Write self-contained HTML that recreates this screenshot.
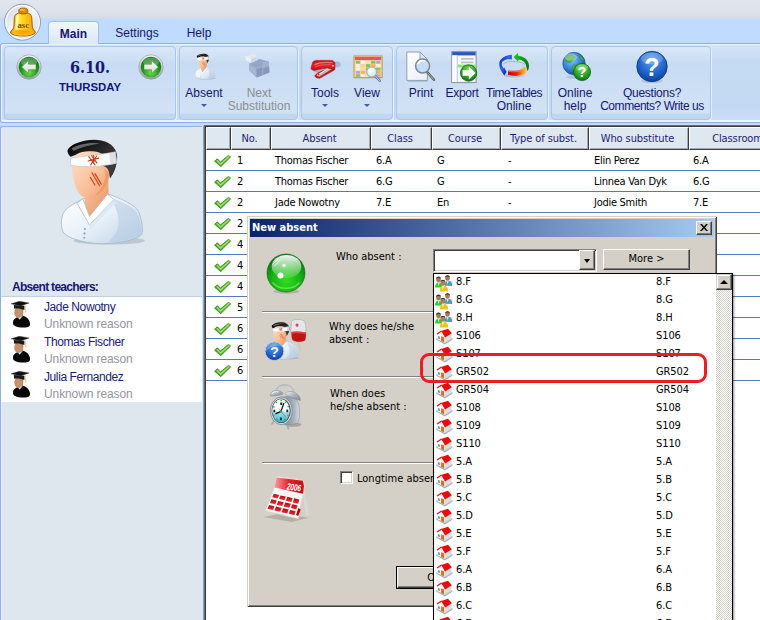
<!DOCTYPE html>
<html><head><meta charset="utf-8"><title>Substitutions</title>
<style>
*{box-sizing:border-box;margin:0;padding:0}
html,body{width:760px;height:620px;overflow:hidden}
body{position:relative;background:#bfdbff;font-family:"Liberation Sans",sans-serif;font-size:12px;color:#15156e}
.abs{position:absolute}
#titlebar{left:0;top:0;width:760px;height:19px;background:linear-gradient(#e2e6ee,#dde2eb 55%,#d6dce7);border-bottom:1px solid #cddcf0}
#tabrow{left:0;top:19px;width:760px;height:24px;background:#bfdbff}
.tab{position:absolute;top:21px;height:23px;line-height:24px;font-size:12px;color:#15156e;text-align:center}
#tabmain{left:48px;width:51px;background:linear-gradient(#f1f6fc,#dbe8f8);border:1px solid #9dbfe8;border-bottom:none;border-radius:4px 4px 0 0;font-weight:bold}
#ribbon{left:0;top:43px;width:764px;height:80px;border:1px solid #8fb0e0;border-bottom-color:#94acd6;border-radius:3px 0 0 3px;background:linear-gradient(#d6e5f7,#c6dbf3 20%,#c3d9f3 80%,#cbdff5);box-shadow:inset 1px 1px 0 #e2f4ff,inset 0 -2px 0 #e6f8ff}
.panel{position:absolute;top:46px;height:74px;border:1px solid #a9c7ea;border-radius:4px;background:linear-gradient(#d9e7f7,#cddff4 18%,#c7dbf3 22%,#d2e2f6 92%,#c0d7f2 93%,#c0d7f2);box-shadow:1px 1px 0 #e6f0fb}
.rlabel{position:absolute;text-align:center;font-size:12px;line-height:13px;color:#15156e;white-space:nowrap}
.rlabel.dis{color:#8d8d8d}
.dd{position:absolute;width:0;height:0;border-left:3px solid transparent;border-right:3px solid transparent;border-top:3px solid #3a5fa8}
</style></head><body>
<div id="titlebar" class="abs"></div>
<div id="tabrow" class="abs"></div>
<div id="ribbon" class="abs"></div>
<div id="tabmain" class="tab">Main</div>
<div class="tab" style="left:110px;width:54px">Settings</div>
<div class="tab" style="left:180px;width:38px">Help</div>
<!--ORB-->
<svg class="abs" style="left:3px;top:3px" width="40" height="40" viewBox="0 0 40 40">
<defs>
<linearGradient id="orbg" x1="0" y1="0" x2="1" y2="1"><stop offset="0" stop-color="#c9d0dc"/><stop offset=".45" stop-color="#f4f6fa"/><stop offset="1" stop-color="#cfd6e3"/></linearGradient>
<linearGradient id="bellg" x1="0" y1="0" x2="1" y2="0"><stop offset="0" stop-color="#e89a00"/><stop offset=".3" stop-color="#ffe94a"/><stop offset=".5" stop-color="#ffd21c"/><stop offset="1" stop-color="#f0a000"/></linearGradient>
<radialGradient id="bellb" cx="55%" cy="40%" r="70%"><stop offset="0" stop-color="#ff9a00"/><stop offset="1" stop-color="#ffc81e"/></radialGradient>
</defs>
<circle cx="19.5" cy="19.2" r="18" fill="url(#orbg)" stroke="#8e9bb3" stroke-width="1"/>
<circle cx="19.5" cy="19.2" r="16.6" fill="none" stroke="#fff" stroke-width="1.2" opacity=".8"/>
<path d="M15.2 10.2 C12.5 11 11.3 13 11.3 15.5 L11 22.6 C10.8 25.5 9.5 27 7.9 28.3 C7 29.5 7.5 30.5 9 31 C13 33.6 27 33.6 30.8 31 C32.3 30.5 32.8 29.5 31.9 28.3 C30.3 27 29.4 25.5 29.2 22.6 L28.8 15.5 C28.8 13 27.6 11 25.3 10.2 Z" fill="url(#bellg)" stroke="#a05a00" stroke-width="1"/>
<ellipse cx="19.9" cy="29.6" rx="10.8" ry="3" fill="url(#bellb)"/>
<ellipse cx="20.3" cy="8" rx="4.7" ry="3" fill="#d88600" stroke="#a05a00" stroke-width=".8"/>
<ellipse cx="19.6" cy="7" rx="2.8" ry="1.2" fill="#f7c030" opacity=".8"/>
<path d="M14.6 13 C14.2 17 14 21 13.4 25.5" stroke="#fffbd0" stroke-width="2.4" fill="none" opacity=".75" stroke-linecap="round"/>
<text x="20.3" y="25.2" font-family="'Liberation Serif',serif" font-weight="bold" font-size="8.6" text-anchor="middle" fill="#8a4a00">asc</text>
</svg>
<!--/ORB-->
<!--PANELS-->
<div class="panel" style="left:4px;width:172px"></div>
<div class="panel" style="left:179px;width:119px"></div>
<div class="panel" style="left:301px;width:92px"></div>
<div class="panel" style="left:396px;width:152px"></div>
<div class="panel" style="left:551px;width:160px"></div>
<!-- date nav -->
<svg class="abs" style="left:16px;top:54px" width="26" height="26" viewBox="0 0 26 26"><defs><radialGradient id="gb" cx="50%" cy="75%" r="70%"><stop offset="0" stop-color="#6fe04a"/><stop offset=".55" stop-color="#1f9a1f"/><stop offset="1" stop-color="#0b6a12"/></radialGradient><linearGradient id="arw" x1="0" y1="0" x2="0" y2="1"><stop offset="0" stop-color="#ffffff"/><stop offset="1" stop-color="#cfd8cf"/></linearGradient><linearGradient id="ring" x1="0" y1="0" x2="0" y2="1"><stop offset="0" stop-color="#f4f4f4"/><stop offset="1" stop-color="#9aa0a6"/></linearGradient></defs><circle cx="13" cy="13" r="12.2" fill="url(#ring)" stroke="#8d949b" stroke-width=".6"/><circle cx="13" cy="13" r="10.3" fill="url(#gb)"/><ellipse cx="13" cy="8" rx="8" ry="4.6" fill="#fff" opacity=".28"/><path d="M5.5 13 L12.5 6.5 V10.3 H20 V15.7 H12.5 V19.5 Z" fill="url(#arw)" stroke="#3a8a30" stroke-width=".5"/></svg>
<svg class="abs" style="left:138px;top:54px" width="26" height="26" viewBox="0 0 26 26"><circle cx="13" cy="13" r="12.2" fill="url(#ring)" stroke="#8d949b" stroke-width=".6"/><circle cx="13" cy="13" r="10.3" fill="url(#gb)"/><ellipse cx="13" cy="8" rx="8" ry="4.6" fill="#fff" opacity=".28"/><path d="M20.5 13 L13.5 6.5 V10.3 H6 V15.7 H13.5 V19.5 Z" fill="url(#arw)" stroke="#3a8a30" stroke-width=".5"/></svg>
<div class="abs" style="left:40px;top:57.5px;width:100px;text-align:center;font-family:'DejaVu Serif Condensed','DejaVu Serif','Liberation Serif',serif;font-weight:bold;font-size:16px;line-height:20px;color:#15157a">6.10.</div>
<div class="abs" style="left:40px;top:80px;width:100px;text-align:center;font-weight:bold;font-size:11.4px;line-height:14px;color:#15157a">THURSDAY</div>
<!-- labels -->
<div class="rlabel" style="left:174px;top:87px;width:60px">Absent</div><div class="dd" style="left:201px;top:104px"></div>
<div class="rlabel dis" style="left:219px;top:87px;width:80px">Next<br>Substitution</div>
<div class="rlabel" style="left:295px;top:87px;width:60px">Tools</div><div class="dd" style="left:322px;top:104px"></div>
<div class="rlabel" style="left:337px;top:87px;width:60px">View</div><div class="dd" style="left:364px;top:104px"></div>
<div class="rlabel" style="left:391px;top:87px;width:60px">Print</div>
<div class="rlabel" style="left:432px;top:87px;width:60px;letter-spacing:-.3px">Export</div>
<div class="rlabel" style="left:474px;top:87px;width:80px"><span style="letter-spacing:-.5px">TimeTables</span><br>Online</div>
<div class="rlabel" style="left:545px;top:87px;width:60px">Online<br>help</div>
<div class="rlabel" style="left:592px;top:87px;width:120px"><span style="letter-spacing:-.25px">Questions?</span><br><span style="letter-spacing:-.45px">Comments? Write us</span></div>
<!--ICONS-->
<svg width="0" height="0" style="position:absolute"><defs>
<linearGradient id="skin" x1="0" y1="0" x2="1" y2="1"><stop offset="0" stop-color="#ffe2cc"/><stop offset=".6" stop-color="#fbbf98"/><stop offset="1" stop-color="#ee9a6c"/></linearGradient>
<linearGradient id="neck" x1="0" y1="0" x2="1" y2="1"><stop offset="0" stop-color="#f9c9a6"/><stop offset="1" stop-color="#e8905e"/></linearGradient>
<linearGradient id="shirt" x1="0" y1="0" x2="1" y2="1"><stop offset="0" stop-color="#ffffff"/><stop offset=".5" stop-color="#e9f1f9"/><stop offset="1" stop-color="#b9cfe4"/></linearGradient>
<linearGradient id="hair" x1="0" y1="0" x2="1" y2="1"><stop offset="0" stop-color="#000"/><stop offset=".5" stop-color="#2a2a2a"/><stop offset="1" stop-color="#555"/></linearGradient>
<symbol id="patient" viewBox="0 0 620 620">
<ellipse cx="330" cy="552" rx="170" ry="18" fill="#5a6a7a" opacity=".25"/>
<path d="M105 440 C112 400 150 382 205 352 L322 328 C385 350 452 380 470 412 C486 452 492 500 486 522 C440 560 335 566 290 566 C230 566 140 546 110 512 C100 482 100 462 105 440 Z" fill="url(#shirt)" stroke="#a3b9cf" stroke-width="4"/>
<path d="M330 345 C390 365 440 390 462 415 C480 455 484 500 480 520 C450 545 380 558 320 560 C380 520 400 440 330 345 Z" fill="#b4cbe2" opacity=".55"/>
<path d="M215 296 L212 372 L236 436 L328 352 L326 262 Z" fill="url(#neck)"/>
<path d="M176 372 L204 352 L236 436 L322 330 L352 356 L236 476 Z" fill="#fff" stroke="#aebfd2" stroke-width="4" stroke-linejoin="round"/>
<path d="M236 476 L352 356 L372 372 L340 392 L240 500 Z" fill="#dbe6f1" opacity=".8"/>
<path d="M132 118 C150 86 232 62 292 74 C344 84 368 120 368 152 C368 192 352 232 334 254 C330 222 326 204 302 196 C300 160 290 142 270 132 C230 126 182 136 146 152 C136 142 128 128 132 118 Z" fill="url(#hair)"/>
<path d="M150 112 C180 92 240 80 286 88 C250 92 200 104 160 124 Z" fill="#fff" opacity=".35"/>
<path d="M150 196 C148 132 200 120 262 126 C312 132 336 172 330 232 C324 292 280 346 230 350 C190 350 158 300 150 196 Z" fill="url(#skin)"/>
<path d="M300 200 C320 230 318 280 262 340 C300 320 328 280 332 232 Z" fill="#e8895a" opacity=".55"/>
<path d="M300 196 C326 200 332 226 334 254 C352 232 368 192 366 160 L300 150 Z" fill="#3a3a3a"/>
<path d="M146 158 C200 150 300 140 360 128 L366 182 C300 198 200 204 146 192 Z" fill="#fdfdfd" stroke="#c0c4c8" stroke-width="3"/>
<path d="M330 134 L360 128 L366 182 L336 190 Z" fill="#c8ccd2" opacity=".6"/>
<path d="M232 150 L262 190 M246 146 L272 182 M230 172 L280 158 M242 190 L270 148 M256 144 L258 176" stroke="#cc3a14" stroke-width="5" fill="none" stroke-linecap="round"/>
<path d="M248 228 L284 290 M262 232 L292 282 M240 250 L262 286" stroke="#cf4a1c" stroke-width="6" fill="none" stroke-linecap="round"/>
<circle cx="214" cy="496" r="5" fill="#8fa2b6"/><circle cx="212" cy="517" r="5" fill="#8fa2b6"/><circle cx="211" cy="538" r="5" fill="#8fa2b6"/>
</symbol>
<symbol id="tick" viewBox="0 0 17 12"><path d="M0.6 6.2 L3.4 3.8 L6.4 7 L14.4 0.4 L16.6 2 L6.8 11.6 Z" fill="#52b026" stroke="#2f7f1c" stroke-width=".8" stroke-linejoin="round"/><path d="M3.2 5.6 L6.6 9 L14.8 1.8" stroke="#a4e070" stroke-width="1.3" fill="none" stroke-linecap="round"/></symbol>
<symbol id="grad" viewBox="0 0 20 27"><path d="M2 21 C2 18.5 4.5 17 7 16 L11.5 14.6 C15 15.6 18.2 18 19 22 C19.2 24.6 18.6 25.4 17 26 C13 27 7 26.6 4 25 C2.4 24 1.8 23 2 21 Z" fill="#080808"/><path d="M6.6 16.2 L8.6 18.6 L11.6 15.2 L11 14.6 Z" fill="#f4f6f8"/><path d="M8.4 18 L8.8 19.2 L9.4 18" fill="#3a6ab0"/><ellipse cx="7.5" cy="11.6" rx="4.3" ry="5.3" fill="#c4926c"/><path d="M9.5 7 C12 9 12.2 14 9.6 16.6 C12.4 15.6 13 10 11.8 7.4 Z" fill="#8a6044" opacity=".7"/><path d="M2.8 4 L13.4 4.7 L13.4 9 C10 7.4 6 7 3.1 7.8 Z" fill="#1a1a1a"/><path d="M0 2.8 L8.3 0.2 L18.2 2 L9.5 4.9 Z" fill="#101010" stroke="#3c3c3c" stroke-width=".4"/><path d="M13.9 4.6 L14.2 8 L14 11.4 L15.4 11.4 L15.2 8 L14.6 4.4 Z" fill="#ecd080"/></symbol>
<symbol id="house" viewBox="0 0 18 17"><path d="M0.2 11.4 L8.8 16.6 L16.4 11.8 L16.4 10.6 L8.8 8 L0.2 10.4 Z" fill="#9a9ea4" opacity=".85"/><path d="M0.2 10.6 L8.8 15.2 L16.4 10.8 L8.8 8 Z" fill="#c8ccd0"/><path d="M1.3 5.8 L5.4 3.2 L8.8 9.2 L8.8 14.4 L1.3 10.9 Z" fill="#fbfbfb"/><path d="M8.8 9.2 L15.4 5.6 L15.4 10.8 L8.8 14.4 Z" fill="#dadde2"/><path d="M5.2 8.6 L7.9 9.6 L7.9 14 L5.2 12.8 Z" fill="#c8780a" stroke="#96580a" stroke-width=".3"/><path d="M2 8.1 L3.8 8.7 L3.8 11 L2 10.4 Z" fill="#6f86b8"/><path d="M5.2 3.1 L12 0.7 L15.9 5.3 L9.1 9.5 Z" fill="#e80c0c"/><path d="M0.7 5.5 L5.2 2.5 L6 3.5 L1.3 6.4 Z" fill="#e80c0c"/></symbol>
<symbol id="ppl" viewBox="0 0 18 18"><path d="M13.5 8 L17.6 6.4 L17.6 11 Z" fill="#e4e6e8"/><path d="M9.6 11.8 C9.6 8.4 11 6.8 13 6.8 C15.6 6.8 17.4 8.6 17.2 12 Z" fill="#4c9cb8"/><path d="M11.6 7 L12.6 10.5 L13.6 7 Z" fill="#fff" opacity=".8"/><ellipse cx="12.5" cy="4" rx="2.3" ry="2.8" fill="#a87858"/><path d="M10 3.4 C10.4 0.6 14.6 0.4 15 3.4 C14 2.2 11.4 2.2 10 3.4 Z" fill="#3a3a3a"/><path d="M0.1 13.4 C0 10 1.6 8.4 3.6 8.4 C6 8.4 7.2 10 7 13.6 Z" fill="#26d026"/><path d="M2.6 8.6 L3.6 12.6 L4.6 8.6 Z" fill="#fff" opacity=".8"/><ellipse cx="3.5" cy="5.5" rx="2.3" ry="2.8" fill="#a87858"/><path d="M1 4.8 C1.4 2 5.6 1.8 6 4.8 C5 3.6 2.4 3.6 1 4.8 Z" fill="#3a3a3a"/><path d="M5 17.4 C4.8 13.6 6.2 11.8 8.2 11.8 C11 11.8 13.2 13.4 13.2 17.4 Z" fill="#f0c414"/><path d="M7 12 L7.8 16 L9 12 Z" fill="#fff" opacity=".8"/><ellipse cx="7.9" cy="8.8" rx="2.4" ry="2.9" fill="#b07c5a"/><path d="M5.4 8 C5.8 5.2 10 5 10.4 8 C9.4 6.8 6.8 6.8 5.4 8 Z" fill="#3a3a3a"/></symbol>
<radialGradient id="qblue" cx="50%" cy="30%" r="75%"><stop offset="0" stop-color="#5aa2f0"/><stop offset=".6" stop-color="#1e62c8"/><stop offset="1" stop-color="#0a3a96"/></radialGradient>
<radialGradient id="qgreen" cx="50%" cy="30%" r="75%"><stop offset="0" stop-color="#7be05a"/><stop offset=".6" stop-color="#28a022"/><stop offset="1" stop-color="#0d6a12"/></radialGradient>
<radialGradient id="globe" cx="40%" cy="35%" r="70%"><stop offset="0" stop-color="#7fc4ff"/><stop offset=".6" stop-color="#2f7fd6"/><stop offset="1" stop-color="#154a9a"/></radialGradient>
<radialGradient id="lens" cx="40%" cy="35%" r="70%"><stop offset="0" stop-color="#ffffff"/><stop offset="1" stop-color="#cfe3f7"/></radialGradient>
<linearGradient id="page" x1="0" y1="0" x2="1" y2="1"><stop offset="0" stop-color="#ffffff"/><stop offset="1" stop-color="#e8eff7"/></linearGradient>
<linearGradient id="cube" x1="0" y1="0" x2="0" y2="1"><stop offset="0" stop-color="#b5c0d4"/><stop offset="1" stop-color="#8f9db8"/></linearGradient>
</defs></svg>
<!-- Absent -->
<svg class="abs" style="left:190px;top:50px" width="32" height="32"><use href="#patient" width="32" height="32"/></svg>
<!-- Next substitution cubes (disabled) -->
<svg class="abs" style="left:243px;top:52px" width="30" height="28" viewBox="0 0 30 28">
<path d="M6 11.7 L16.5 7 L25.8 9.4 L26.4 20.4 L13.6 25.6 L6 18.1 Z" fill="#95a7c8"/>
<path d="M6 11.7 L13.4 16.5 L13.6 25.6 L6 18.1 Z" fill="#a3b3d0"/>
<path d="M13.4 16.5 L26 12 L26.4 20.4 L13.6 25.6 Z" fill="#8799bc"/>
<path d="M19.5 10 L25.8 9.4 L26 14.5 L19.8 16.4 Z" fill="#a9b8d4" opacity=".7"/>
<path d="M13.5 16.5 L19.8 14.4 L19.9 23 M6 15 L13.5 21" stroke="#b5c2da" stroke-width=".7" fill="none" opacity=".8"/>
<path d="M2.3 4.1 L11.9 1.5 L13.9 4.7 L13.6 8.5 L8.4 10.5 L3.1 8.5 Z" fill="#e3e7ee"/>
<path d="M2.3 4.1 L8 6 L8.4 10.5 L3.1 8.5 Z" fill="#edf0f5"/>
<path d="M8 6 L13.9 4.7 L13.6 8.5 L8.4 10.5 Z" fill="#d3d9e4"/>
</svg>
<!-- Tools: stapler -->
<svg class="abs" style="left:309px;top:58px" width="33" height="23" viewBox="0 0 33 23">
<defs><linearGradient id="stp" x1="0" y1="0" x2="0" y2="1"><stop offset="0" stop-color="#c80c12"/><stop offset=".45" stop-color="#e8262c"/><stop offset="1" stop-color="#c00a10"/></linearGradient></defs>
<ellipse cx="28" cy="6.4" rx="3.6" ry="3" fill="#7a869c" opacity=".4"/>
<path d="M5.5 17.7 L8.6 15 L18.1 9.3 L26 9.8 L25.5 11.9 L10.7 20.3 L7.6 19.9 Z" fill="#d0141a" stroke="#a8080e" stroke-width=".5"/>
<path d="M7.3 17.3 L18.1 10.2 L23.4 10.8 L10.2 18.8 Z" fill="#b4c2c2"/>
<path d="M8.5 17 L19 10.8" stroke="#e8eeee" stroke-width=".8"/>
<circle cx="9.6" cy="16.6" r=".9" fill="#e03038"/>
<path d="M4.9 12.4 L9.2 11.4 L18.6 9.8 L18 11 L8.6 14.2 L5.5 14.4 Z" fill="#a9b2b4"/>
<path d="M2 9.8 L3.9 3.7 L6.5 2.4 L23.4 2.4 L26 4.5 L26 9.8 L24.4 11.4 L18.6 9.8 L9.2 11.6 L4.9 12.6 L2.4 11.6 Z" fill="url(#stp)" stroke="#a8080e" stroke-width=".5"/>
<path d="M6 6.5 C10 4.6 17 4.2 23 4.6" stroke="#f7a0a4" stroke-width="1.2" fill="none" stroke-linecap="round" opacity=".7"/>
<path d="M6.4 8.8 C10 7 16 6.4 21 6.6" stroke="#f28086" stroke-width=".9" fill="none" stroke-linecap="round" opacity=".6"/>
<rect x="23.2" y="7" width="1.5" height="1.5" fill="#e8e4e4"/>
</svg>
<!-- View: timetable + magnifier -->
<svg class="abs" style="left:352.5px;top:54.5px" width="32" height="28.2" viewBox="0 0 34 30">
<rect x="1.5" y="22.5" width="29" height="2.5" fill="#7a8698" opacity=".35"/>
<rect x="1" y="1" width="30" height="23" fill="#f3dcb0" stroke="#d49a4a" stroke-width="1.2"/>
<rect x="2" y="2" width="28" height="3.4" fill="#e8545a"/>
<g>
<rect x="3" y="6.2" width="4.6" height="3" fill="#7cc85a"/><rect x="8.4" y="6.2" width="4.6" height="3" fill="#f6f0e6"/><rect x="13.8" y="6.2" width="4.6" height="3" fill="#f6e2c0"/><rect x="19.2" y="6.2" width="4.6" height="3" fill="#7cc85a"/><rect x="24.6" y="6.2" width="4.6" height="3" fill="#b0a6e6"/>
<rect x="3" y="9.8" width="4.6" height="3" fill="#f6f0e6"/><rect x="8.4" y="9.8" width="4.6" height="3" fill="#ffd28a"/><rect x="13.8" y="9.8" width="4.6" height="3" fill="#7cc85a"/><rect x="19.2" y="9.8" width="4.6" height="3" fill="#ffb04a"/><rect x="24.6" y="9.8" width="4.6" height="3" fill="#f6f0e6"/>
<rect x="3" y="13.4" width="4.6" height="3" fill="#f6f0e6"/><rect x="8.4" y="13.4" width="4.6" height="3" fill="#ffd9a0"/><rect x="13.8" y="13.4" width="4.6" height="3" fill="#7cc85a"/><rect x="19.2" y="13.4" width="4.6" height="3" fill="#f6f0e6"/><rect x="24.6" y="13.4" width="4.6" height="3" fill="#7cc85a"/>
<rect x="3" y="17" width="4.6" height="3" fill="#b0a6e6"/><rect x="8.4" y="17" width="4.6" height="3" fill="#ffb04a"/><rect x="13.8" y="17" width="4.6" height="3" fill="#f6f0e6"/><rect x="19.2" y="17" width="4.6" height="3" fill="#ffd28a"/><rect x="24.6" y="17" width="4.6" height="3" fill="#ffb04a"/>
<rect x="3" y="20.6" width="4.6" height="2.6" fill="#7cc85a"/><rect x="8.4" y="20.6" width="4.6" height="2.6" fill="#f6f0e6"/><rect x="13.8" y="20.6" width="4.6" height="2.6" fill="#f6e2c0"/><rect x="19.2" y="20.6" width="4.6" height="2.6" fill="#f6f0e6"/><rect x="24.6" y="20.6" width="4.6" height="2.6" fill="#b0a6e6"/>
</g>
<path d="M23.5 22 L28.5 27.5" stroke="#6a6e78" stroke-width="2.4" stroke-linecap="round"/><path d="M23.8 22.3 L28.3 27.2" stroke="#e4e6ea" stroke-width="1" stroke-linecap="round"/>
<circle cx="19.8" cy="18" r="5.3" fill="url(#lens)" stroke="#a9adb6" stroke-width="1.3" opacity=".96"/>
</svg>
<!-- Print preview -->
<svg class="abs" style="left:404px;top:50px" width="34" height="33" viewBox="0 0 34 33">
<path d="M4 31.3 L23.8 31.3" stroke="#7a8698" stroke-width="1" opacity=".4"/>
<path d="M2.8 2 H16 L23.4 9.4 V30.4 H2.8 Z" fill="url(#page)" stroke="#8c9db8" stroke-width="1"/>
<path d="M16 2 V9.4 H23.4 Z" fill="#dfe8f2" stroke="#7e90ac" stroke-width=".8"/>
<path d="M23.4 22.4 L30 29.8" stroke="#5c5850" stroke-width="2.4" stroke-linecap="round"/>
<path d="M23.8 22.9 L29.7 29.4" stroke="#c8c2b8" stroke-width=".9" stroke-linecap="round"/>
<circle cx="18.6" cy="16" r="7" fill="#c2dcf8" stroke="#7c828c" stroke-width="1.5" opacity=".96"/>
<path d="M14 13.6 A5.4 5.4 0 0 1 20.6 11" stroke="#fff" stroke-width="1.6" fill="none" stroke-linecap="round"/>
</svg>
<!-- Export -->
<svg class="abs" style="left:450px;top:50px" width="30" height="34" viewBox="0 0 30 34">
<rect x="1.7" y="1.6" width="24.4" height="31" fill="#f6f7f9" stroke="#8a8e96" stroke-width="1"/>
<rect x="2.2" y="2.1" width="23.4" height="3.3" fill="#2458bc"/>
<rect x="2.2" y="5.4" width="4.6" height="26.6" fill="#fbfbfc"/>
<rect x="6.8" y="5.4" width=".8" height="26.6" fill="#a8c0e8"/>
<rect x="11" y="8" width="12.5" height="1.7" fill="#bcc0c6"/><rect x="11" y="11.6" width="12.5" height="1.7" fill="#bcc0c6"/>
<rect x="7.6" y="14.6" width="18" height="2.8" fill="#8ee070"/>
<circle cx="18.6" cy="23" r="8.2" fill="url(#qgreen)" stroke="#0c5a10" stroke-width=".7"/>
<path d="M25.6 23 L18.8 16.4 V20.2 H12.6 V25.8 H18.8 V29.6 Z" fill="#fff"/>
</svg>
<!-- TimeTables Online -->
<svg class="abs" style="left:498px;top:52px" width="32" height="26" viewBox="0 0 32 26">
<defs><linearGradient id="ttb" x1="0" y1="0" x2="1" y2="1"><stop offset="0" stop-color="#0a1a9a"/><stop offset=".45" stop-color="#2a6af0"/><stop offset=".7" stop-color="#0a2ab8"/><stop offset="1" stop-color="#3a9aff"/></linearGradient>
<linearGradient id="ttg" x1="0" y1="0" x2="1" y2="1"><stop offset="0" stop-color="#20d820"/><stop offset=".6" stop-color="#0a8a10"/><stop offset="1" stop-color="#066a0a"/></linearGradient>
<linearGradient id="ttr" x1="0" y1="0" x2="1" y2="0"><stop offset="0" stop-color="#c00808"/><stop offset=".45" stop-color="#f01808"/><stop offset=".8" stop-color="#ff9a18"/><stop offset="1" stop-color="#ffd040"/></linearGradient></defs>
<ellipse cx="16" cy="23.6" rx="10" ry="1.8" fill="#5a6a80" opacity=".25"/>
<path d="M5 12 C9 8.5 22 8.5 27 12.5" stroke="#7a8aa4" stroke-width="1" fill="none" opacity=".45"/>
<path d="M30.9 13.5 C31 9 27 4.5 20.4 3.7 L19.7 1 L15.5 4.9 L20.1 9.6 L20.4 7.6 C25 8 28 11 28.2 14 C28.6 16 29 17.6 29.6 19 C30.6 17.4 31 15.6 30.9 13.5 Z" fill="url(#ttg)"/>
<path d="M13.8 2.8 C7 3 1.5 7 1.3 11.5 C1.2 13.4 1.6 15 2 16.5 C3 19 5 21.6 6.3 23.4 L8.6 20.1 L5.9 14.8 L6.1 16.6 C3.6 14 3.2 11 4.6 9.5 C7 7.5 10 7.1 13.8 7.4 Z" fill="url(#ttb)"/>
<path d="M10.2 18.4 C16 19.5 22 18.5 25 16.5 L26 14.4 L28.9 18.1 L26.6 23 L25.7 22 C21 24 15 24.3 9.9 22.8 Z" fill="url(#ttr)"/>
<path d="M10.6 19.4 C16 20.4 22 19.6 25.6 17.6" stroke="#ffb070" stroke-width=".8" fill="none" opacity=".7"/>
</svg>
<!-- Online help -->
<svg class="abs" style="left:560px;top:50px" width="34" height="33" viewBox="0 0 34 33">
<ellipse cx="15" cy="27" rx="9" ry="1.8" fill="#6a7688" opacity=".25"/>
<circle cx="14" cy="13.5" r="11.2" fill="url(#globe)" stroke="#1a4a92" stroke-width=".6"/>
<path d="M6.5 6.5 C9.3 4.2 12.6 4.6 14.4 6.5 C15.8 8.4 13 9.8 11.6 11.6 C10.2 13.5 7.8 12.1 6 11.2 C5 9.3 5.4 7.9 6.5 6.5 Z M13 15 C15.3 14 18.2 15.4 18.6 17.8 C18.6 20.1 16.3 22 14.4 22.9 C13 21 11.6 17.3 13 15 Z M18.6 5 C21 6 23.3 8.4 23.8 10.7 C21.9 10.2 19.6 8.8 18.6 5 Z" fill="#4cae3a" stroke="#2f7f28" stroke-width=".4"/>
<ellipse cx="11" cy="7.2" rx="6.5" ry="3.6" fill="#fff" opacity=".3"/>
<circle cx="22" cy="22" r="8.6" fill="url(#qgreen)" stroke="#0c5a10" stroke-width=".7"/>
<ellipse cx="22" cy="18" rx="6" ry="3.4" fill="#fff" opacity=".22"/>
<text x="22" y="27" text-anchor="middle" font-family="'Liberation Sans',sans-serif" font-weight="bold" font-size="14" fill="#fff">?</text>
</svg>
<!-- Questions -->
<svg class="abs" style="left:635px;top:50px" width="34" height="34" viewBox="0 0 34 34">
<ellipse cx="17" cy="31" rx="11" ry="2" fill="#6a7688" opacity=".25"/>
<circle cx="17" cy="16.5" r="15.2" fill="url(#qblue)" stroke="#08307e" stroke-width=".8"/>
<ellipse cx="17" cy="8.5" rx="11" ry="6" fill="#fff" opacity=".22"/>
<text x="17" y="25.6" text-anchor="middle" font-family="'Liberation Sans',sans-serif" font-weight="bold" font-size="25" fill="#fff">?</text>
</svg>
<!--/ICONS-->
<!--/PANELS-->
<!--MAIN-->
<style>
#left{left:0;top:126px;width:202px;height:500px;background:#dee7ee;border-left:1px solid #8db2e6;border-top:1px solid #8db2e6;border-radius:3px 0 0 0;box-shadow:inset 1px 0 0 #eaf0f6}
#tbl{left:205px;top:126px;width:560px;height:500px;background:#fff;border-left:1px solid #3c3c3c;border-top:1px solid #3c3c3c;box-shadow:-1px -1px 0 #6c6c70,-2px 0 0 #8fa0bc,-3px 0 0 #c6ecff;font-family:"DejaVu Sans Condensed","Liberation Sans",sans-serif;font-size:11px;letter-spacing:-.28px;color:#000}
.th{position:absolute;top:127px;height:23px;background:#dfe8f0;letter-spacing:-.1px !important;border-left:1px solid #fff;border-top:1px solid #fff;border-right:1px solid #3c3c3c;border-bottom:1px solid #3c3c3c;box-shadow:inset -1px -1px 0 rgba(60,60,60,.35);text-align:center;padding-right:3px;line-height:21px;color:#1c1c74;font-family:"DejaVu Sans Condensed","Liberation Sans",sans-serif;font-size:11px;letter-spacing:-.28px;white-space:nowrap;overflow:hidden}
.tr{position:absolute;left:206px;width:554px;height:21px;border-bottom:1px solid #5578bd;font-family:"DejaVu Sans Condensed","Liberation Sans",sans-serif;font-size:11px;letter-spacing:-.28px;color:#000;line-height:21px;white-space:nowrap}
.tr span{position:absolute;top:0}
.chk{position:absolute;left:8px;top:5px}
.lt{position:absolute;left:44px;font-size:12px;white-space:nowrap;line-height:14px;letter-spacing:-.4px}
</style>
<div id="left" class="abs"></div>
<div class="abs" style="left:1px;top:296px;width:201px;height:106px;background:#fff;border-top:1px solid #c3d2e0"></div>
<svg class="abs" style="left:40px;top:125px" width="130" height="130"><use href="#patient" width="130" height="130"/></svg>
<div class="abs" style="left:12px;top:280px;font-weight:bold;font-size:12px;line-height:14px;color:#15157a;letter-spacing:-.7px">Absent teachers:</div>
<svg class="abs" style="left:11px;top:301px" width="20" height="27" viewBox="0 0 20 27"><use href="#grad"/></svg>
<div class="lt" style="top:300px;color:#1a1a78">Jade Nowotny</div><div class="lt" style="top:317px;color:#9494a0;letter-spacing:-.1px">Unknown reason</div>
<svg class="abs" style="left:11px;top:336px" width="20" height="27" viewBox="0 0 20 27"><use href="#grad"/></svg>
<div class="lt" style="top:335px;color:#1a1a78">Thomas Fischer</div><div class="lt" style="top:352px;color:#9494a0;letter-spacing:-.1px">Unknown reason</div>
<svg class="abs" style="left:11px;top:371px" width="20" height="27" viewBox="0 0 20 27"><use href="#grad"/></svg>
<div class="lt" style="top:370px;color:#1a1a78">Julia Fernandez</div><div class="lt" style="top:387px;color:#9494a0;letter-spacing:-.1px">Unknown reason</div>
<div id="tbl" class="abs"></div>
<div class="th" style="left:206px;width:25px"></div><div class="th" style="left:231px;width:40px">No.</div><div class="th" style="left:271px;width:100px">Absent</div><div class="th" style="left:371px;width:61px">Class</div><div class="th" style="left:432px;width:69px">Course</div><div class="th" style="left:501px;width:88px">Type of subst.</div><div class="th" style="left:589px;width:100px">Who substitute</div><div class="th" style="left:689px;width:100px">Classroom</div>
<div class="tr" style="top:150px"><svg class="chk" width="17" height="12" viewBox="0 0 17 12"><use href="#tick"/></svg><span style="left:31px">1</span><span style="left:69px">Thomas Fischer</span><span style="left:170px">6.A</span><span style="left:231px">G</span><span style="left:302px">-</span><span style="left:388px">Elin Perez</span><span style="left:487px">6.A</span></div>
<div class="tr" style="top:171px"><svg class="chk" width="17" height="12" viewBox="0 0 17 12"><use href="#tick"/></svg><span style="left:31px">2</span><span style="left:69px">Thomas Fischer</span><span style="left:170px">6.G</span><span style="left:231px">G</span><span style="left:302px">-</span><span style="left:388px">Linnea Van Dyk</span><span style="left:487px">6.G</span></div>
<div class="tr" style="top:192px"><svg class="chk" width="17" height="12" viewBox="0 0 17 12"><use href="#tick"/></svg><span style="left:31px">2</span><span style="left:69px">Jade Nowotny</span><span style="left:170px">7.E</span><span style="left:231px">En</span><span style="left:302px">-</span><span style="left:388px">Jodie Smith</span><span style="left:487px">7.E</span></div>
<div class="tr" style="top:213px"><svg class="chk" width="17" height="12" viewBox="0 0 17 12"><use href="#tick"/></svg><span style="left:31px">2</span></div>
<div class="tr" style="top:234px"><svg class="chk" width="17" height="12" viewBox="0 0 17 12"><use href="#tick"/></svg><span style="left:31px">4</span></div>
<div class="tr" style="top:255px"><svg class="chk" width="17" height="12" viewBox="0 0 17 12"><use href="#tick"/></svg><span style="left:31px">4</span></div>
<div class="tr" style="top:276px"><svg class="chk" width="17" height="12" viewBox="0 0 17 12"><use href="#tick"/></svg><span style="left:31px">4</span></div>
<div class="tr" style="top:297px"><svg class="chk" width="17" height="12" viewBox="0 0 17 12"><use href="#tick"/></svg><span style="left:31px">5</span></div>
<div class="tr" style="top:318px"><svg class="chk" width="17" height="12" viewBox="0 0 17 12"><use href="#tick"/></svg><span style="left:31px">6</span></div>
<div class="tr" style="top:339px"><svg class="chk" width="17" height="12" viewBox="0 0 17 12"><use href="#tick"/></svg><span style="left:31px">6</span></div>
<div class="tr" style="top:360px"><svg class="chk" width="17" height="12" viewBox="0 0 17 12"><use href="#tick"/></svg><span style="left:31px">6</span></div>
<!--/MAIN-->
<!--DIALOG-->
<style>
#dlg{left:247px;top:216px;width:470px;height:391px;background:#d4d0c8;box-shadow:inset 1px 1px 0 #d4d0c8,inset -1px -1px 0 #404040,inset 2px 2px 0 #fff,inset -2px -2px 0 #808080;font-family:"DejaVu Sans Condensed","Liberation Sans",sans-serif;font-size:11px;letter-spacing:0;color:#000}
#dlg .t{position:absolute;white-space:nowrap;line-height:13px}
#dtitle{position:absolute;left:3px;top:3px;width:464px;height:18px;background:linear-gradient(90deg,#0a246a,#a6caf0);color:#fff;font-weight:bold;line-height:18px;padding-left:2px;font-size:11px;letter-spacing:0}
.sep{position:absolute;left:15px;width:455px;height:2px;border-top:1px solid #808080;border-bottom:1px solid #fff}
.btn{position:absolute;background:#d4d0c8;border:1px solid;border-color:#fff #404040 #404040 #fff;box-shadow:inset -1px -1px 0 #808080;text-align:center}
</style>
<div id="dlg" class="abs">
<div id="dtitle">New absent</div>
<div class="btn" style="left:449px;top:5px;width:16px;height:14px"><svg width="8" height="7" viewBox="0 0 8 7" style="position:absolute;left:3px;top:2px"><path d="M0 0 H2 L4 2.5 L6 0 H8 L5 3.5 L8 7 H6 L4 4.5 L2 7 H0 L3 3.5 Z" fill="#000"/></svg></div>
<div class="t" style="left:89px;top:34px">Who absent :</div>
<div class="t" style="left:82px;top:104px">Why does he/she<br>absent :</div>
<div class="t" style="left:83px;top:171px">When does<br>he/she absent :</div>
<div class="t" style="left:110px;top:256px">Longtime absent</div>
<div class="sep" style="top:95px"></div>
<div class="sep" style="top:160px"></div>
<div class="sep" style="top:246px"></div>
<!-- combobox -->
<div class="abs" style="left:186px;top:33px;width:164px;height:23px;background:#fff;border:1px solid;border-color:#808080 #fff #fff #808080;box-shadow:inset 1px 1px 0 #404040,inset -1px -1px 0 #d4d0c8"></div>
<div class="btn" style="left:332px;top:34px;width:16px;height:20px"><div style="position:absolute;left:4px;top:8px;width:0;height:0;border-left:3.5px solid transparent;border-right:3.5px solid transparent;border-top:4px solid #000"></div></div>
<div class="btn" style="left:356px;top:33px;width:87px;height:21px;line-height:18px">More &gt;</div>
<!-- checkbox -->
<div class="abs" style="left:93px;top:255px;width:13px;height:13px;background:#fff;border:1px solid;border-color:#808080 #fff #fff #808080;box-shadow:inset 1px 1px 0 #404040,inset -1px -1px 0 #d4d0c8"></div>
<!-- OK button -->
<div class="abs" style="left:149px;top:350px;width:77px;height:23px;border:1px solid #000"><div class="btn" style="left:0;top:0;width:75px;height:21px;line-height:20px">OK</div></div>
<!--DLGICONS-->
<svg class="abs" style="left:16px;top:34px" width="46" height="46" viewBox="0 0 46 46">
<defs><radialGradient id="ballg" cx="50%" cy="70%" r="62%"><stop offset="0" stop-color="#2ee01e"/><stop offset=".6" stop-color="#18b414"/><stop offset="1" stop-color="#0a7a12"/></radialGradient>
<linearGradient id="ballh" x1="0" y1="0" x2="0" y2="1"><stop offset="0" stop-color="#ffffff" stop-opacity=".95"/><stop offset="1" stop-color="#ffffff" stop-opacity=".12"/></linearGradient></defs>
<ellipse cx="23.5" cy="41.5" rx="13" ry="2.2" fill="#7a766e" opacity=".35"/>
<circle cx="23" cy="23" r="19" fill="url(#ballg)" stroke="#0a6a10" stroke-width=".6"/>
<ellipse cx="23.5" cy="16.5" rx="14.8" ry="11.5" fill="url(#ballh)"/>
<path d="M10 33 C16 40 30 40 36 33" stroke="#7af06a" stroke-width="1.5" fill="none" opacity=".7" stroke-linecap="round"/>
<circle cx="17.5" cy="25.5" r="3" fill="#fff"/><circle cx="21" cy="15.5" r="1.8" fill="#fff" opacity=".9"/>
<path d="M10 14 L15 9 M11.5 16 L17 10.5" stroke="#fff" stroke-width="1" opacity=".8" stroke-linecap="round"/>
</svg>
<svg class="abs" style="left:14.5px;top:101px" width="46" height="46"><use href="#patient" width="46" height="46"/></svg>
<svg class="abs" style="left:42px;top:102px" width="20" height="34" viewBox="0 0 20 34">
<path d="M3 2.5 C7 0.8 13 1.2 15.5 3 C17.5 8 17.5 18 16 22.5 C12 24.5 6 24 3.5 22 C1.5 16 1.5 8 3 2.5 Z" fill="#e4e8ec" stroke="#a8b0b8" stroke-width=".7"/>
<path d="M2.4 14 C6 13 12 13.5 17 14.5 C17 18 16.6 20.8 16 22.5 C12 24.5 6 24 3.5 22 C2.7 19.6 2.4 16.8 2.4 14 Z" fill="#c01414"/>
<path d="M2.5 14 C7 13.2 12 13.6 16.9 14.6 L16.8 16.2 C12 15.2 7 15 2.5 15.8 Z" fill="#e85048" opacity=".8"/>
<path d="M6.5 7 H9.5 M8 5.5 V9" stroke="#e04040" stroke-width="1.3"/>
<path d="M9.5 24 C9.5 27 12 29 11 33" stroke="#b8bcc0" stroke-width=".7" fill="none"/>
</svg>
<svg class="abs" style="left:17px;top:125px" width="21" height="21" viewBox="0 0 21 21">
<circle cx="10.4" cy="10.2" r="9.4" fill="url(#qblue)" stroke="#c8ccd4" stroke-width="1"/>
<path d="M2 11 C5 6 12 3 18.5 6 C16 2.5 12 1 9 1.4 C4 2 1 6.5 2 11 Z" fill="#fff" opacity=".25"/>
<text x="10.4" y="15.6" text-anchor="middle" font-family="'Liberation Sans',sans-serif" font-weight="bold" font-size="14.5" fill="#f4f0e4">?</text>
</svg>
<!-- clock -->
<svg class="abs" style="left:20px;top:166px" width="38" height="50" viewBox="0 0 38 50">
<defs><linearGradient id="silver" x1="0" y1="0" x2="1" y2="0"><stop offset="0" stop-color="#e4e8ec"/><stop offset=".35" stop-color="#8e98a2"/><stop offset=".7" stop-color="#a8b2bc"/><stop offset="1" stop-color="#d8dee4"/></linearGradient>
<linearGradient id="bell" x1="0" y1="0" x2="1" y2="1"><stop offset="0" stop-color="#f4f6f8"/><stop offset=".5" stop-color="#aab4be"/><stop offset="1" stop-color="#7c8690"/></linearGradient>
<linearGradient id="face" x1="0" y1="0" x2="0" y2="1"><stop offset="0" stop-color="#ffffff"/><stop offset=".5" stop-color="#f4fbfd"/><stop offset=".56" stop-color="#a6e2f0"/><stop offset="1" stop-color="#30b0d2"/></linearGradient></defs>
<ellipse cx="26" cy="42.6" rx="8.5" ry="2.2" fill="#5a564e" opacity=".35"/>
<path d="M8.8 9.4 C10 1 25 0.5 26.8 9.6" stroke="#b4bcc4" stroke-width="1.7" fill="none"/>
<path d="M7.4 38.5 L5 41.8 M20 41.4 L21.4 46.7" stroke="#a2aab2" stroke-width="1.9" stroke-linecap="round"/>
<path d="M14 15.6 C18 13.6 24 14.2 29.5 17.6 C33.2 22 33.4 35 31 40.6 C27 43.2 18 43 14 41.5 Z" fill="url(#silver)" stroke="#7c8690" stroke-width=".5"/>
<ellipse cx="14.3" cy="28.8" rx="11" ry="13.8" fill="#d4dae0" stroke="#6e7882" stroke-width=".7"/>
<ellipse cx="14.2" cy="28.8" rx="9.6" ry="12.3" fill="#4a525a"/>
<ellipse cx="14" cy="28.8" rx="8.8" ry="11.5" fill="url(#face)"/>
<path d="M3.4 14 C3 10.5 6 8.2 9.6 8.4 C13.4 8.6 16 10.4 16.2 12 C12 13.4 7 14.4 3.4 14 Z" fill="url(#bell)" stroke="#7c8690" stroke-width=".5"/>
<path d="M18 11.8 C19.6 9.2 24.6 8.6 28.6 11 C32 13 33.6 16 33.4 18.4 C28 17.4 22 14.8 18 11.8 Z" fill="url(#bell)" stroke="#7c8690" stroke-width=".5"/>
<path d="M5 11.6 C6.4 9.8 9 9.4 11 9.8" stroke="#fff" stroke-width=".9" fill="none" opacity=".8" stroke-linecap="round"/>
<g fill="#18c038"><circle cx="14.2" cy="18.6" r=".85"/><circle cx="18.6" cy="20.2" r=".85"/><circle cx="21.2" cy="24.6" r=".85"/><circle cx="21" cy="33.4" r=".85"/><circle cx="9.4" cy="20.4" r=".85"/><circle cx="6.8" cy="24.8" r=".85"/><circle cx="6.8" cy="33" r=".85"/><circle cx="18" cy="37.4" r=".85"/><circle cx="10" cy="37.6" r=".85"/></g>
<g fill="#222"><rect x="13.3" y="20.4" width="1.9" height="2.6"/><rect x="19.4" y="27.6" width="1.8" height="2.6"/><rect x="6.4" y="27.8" width="1.8" height="2.4"/><rect x="13" y="35.6" width="1.8" height="2.6"/></g>
<path d="M14 29.4 L16.8 21.4" stroke="#111" stroke-width="1.3" stroke-linecap="round"/><path d="M14 29.4 L9 31.6" stroke="#111" stroke-width="1.5" stroke-linecap="round"/><path d="M12 26.6 L18.4 35" stroke="#e03030" stroke-width=".6"/><circle cx="14" cy="29.4" r="1.2" fill="#20b040"/>
</svg>
<!-- calendar -->
<svg class="abs" style="left:12.5px;top:255px" width="53" height="53" viewBox="0 0 50 50">
<defs><linearGradient id="calred" x1="0" y1="0" x2="1" y2="0"><stop offset="0" stop-color="#f8a0a0"/><stop offset=".5" stop-color="#e02028"/><stop offset="1" stop-color="#c40c14"/></linearGradient>
<linearGradient id="calc" x1="0" y1="0" x2="0" y2="1"><stop offset="0" stop-color="#b00810"/><stop offset="1" stop-color="#f03038"/></linearGradient></defs>
<path d="M3 43.5 L30 48 L46 44 L20 40 Z" fill="#6a665e" opacity=".3"/>
<path d="M40 8 L46 40 L44 44 L38 12 Z" fill="#d8d8d4"/>
<path d="M16 5 L40 8 L42 14 L36 45 L5 37.5 L13 17 Z" fill="#f6f6f4" stroke="#d4d4d0" stroke-width=".6"/>
<path d="M16 5.5 L40 8.5 L41.5 14 L40.5 21.5 L13.5 15.5 Z" fill="url(#calred)"/>
<path d="M16 5.2 L40 8.2 L40.2 9.2 L15.7 6.2 Z" fill="#fff" opacity=".8"/>
<text x="39" y="18.4" text-anchor="end" font-family="'Liberation Sans',sans-serif" font-weight="bold" font-style="italic" font-size="9" fill="#fff" transform="rotate(8 32 14)" textLength="13.5" lengthAdjust="spacingAndGlyphs">2006</text>
<g fill="url(#calc)">
<path d="M13 21.5 L18 22.6 L16.6 26 L11.6 24.8 Z"/><path d="M19.4 23 L24.4 24.1 L23 27.6 L18 26.4 Z"/><path d="M25.8 24.4 L30.8 25.6 L29.6 29.2 L24.4 28 Z"/><path d="M32.2 25.8 L37 27 L36 30.8 L31 29.6 Z"/>
<path d="M10.8 26.6 L15.8 27.8 L14.4 31.4 L9.4 30.2 Z"/><path d="M17.2 28.2 L22.4 29.4 L21 33 L15.8 31.8 Z"/><path d="M23.8 29.8 L29 31 L27.8 34.6 L22.4 33.4 Z"/><path d="M30.4 31.4 L35.4 32.6 L34.2 36.4 L29.2 35 Z"/>
<path d="M8.6 32 L13.6 33.2 L12.2 36.8 L7 35.6 Z"/><path d="M15.2 33.6 L20.4 34.8 L19 38.4 L13.6 37.2 Z"/><path d="M21.8 35.2 L27 36.4 L25.8 40 L20.4 38.8 Z"/><path d="M28.4 36.8 L33.6 38 L32.4 41.8 L27.2 40.4 Z"/>
</g>
<path d="M36.2 35 L38.4 36.4 L36 42.4 L34 41.4 Z" fill="#a8040c"/>
</svg>
<!--/DLGICONS-->
</div>
<!--/DIALOG-->
<!--LIST-->
<style>
#lst{left:433px;top:273px;width:300px;height:360px;background:#fff;border:1px solid #000;box-shadow:1px 1px 2px rgba(0,0,0,.45);font-family:"DejaVu Sans Condensed","Liberation Sans",sans-serif;font-size:11px;letter-spacing:-.1px;color:#000;overflow:hidden}
.li{position:absolute;left:0;width:282px;height:18px;line-height:15px;white-space:nowrap}
.li svg{position:absolute;left:2px;top:0}
.li b{position:absolute;left:22px;font-weight:normal}
.li i{position:absolute;left:222px;font-style:normal}
#sb{position:absolute;left:282px;top:0;width:16px;height:360px;background:#e9e7e2;background-image:repeating-conic-gradient(#fff 0 25%,#d4d0c8 0 50%);background-size:2px 2px}
</style>
<div id="lst" class="abs">
<div class="li" style="top:0px"><svg width="18" height="18" viewBox="0 0 18 18" style="left:1px;top:0"><use href="#ppl"/></svg><b>8.F</b><i>8.F</i></div>
<div class="li" style="top:18px"><svg width="18" height="18" viewBox="0 0 18 18" style="left:1px;top:0"><use href="#ppl"/></svg><b>8.G</b><i>8.G</i></div>
<div class="li" style="top:36px"><svg width="18" height="18" viewBox="0 0 18 18" style="left:1px;top:0"><use href="#ppl"/></svg><b>8.H</b><i>8.H</i></div>
<div class="li" style="top:54px"><svg width="18" height="17" viewBox="0 0 18 17"><use href="#house"/></svg><b>S106</b><i>S106</i></div>
<div class="li" style="top:72px"><svg width="18" height="17" viewBox="0 0 18 17"><use href="#house"/></svg><b>S107</b><i>S107</i></div>
<div class="li" style="top:90px"><svg width="18" height="17" viewBox="0 0 18 17"><use href="#house"/></svg><b>GR502</b><i>GR502</i></div>
<div class="li" style="top:108px"><svg width="18" height="17" viewBox="0 0 18 17"><use href="#house"/></svg><b>GR504</b><i>GR504</i></div>
<div class="li" style="top:126px"><svg width="18" height="17" viewBox="0 0 18 17"><use href="#house"/></svg><b>S108</b><i>S108</i></div>
<div class="li" style="top:144px"><svg width="18" height="17" viewBox="0 0 18 17"><use href="#house"/></svg><b>S109</b><i>S109</i></div>
<div class="li" style="top:162px"><svg width="18" height="17" viewBox="0 0 18 17"><use href="#house"/></svg><b>S110</b><i>S110</i></div>
<div class="li" style="top:180px"><svg width="18" height="17" viewBox="0 0 18 17"><use href="#house"/></svg><b>5.A</b><i>5.A</i></div>
<div class="li" style="top:198px"><svg width="18" height="17" viewBox="0 0 18 17"><use href="#house"/></svg><b>5.B</b><i>5.B</i></div>
<div class="li" style="top:216px"><svg width="18" height="17" viewBox="0 0 18 17"><use href="#house"/></svg><b>5.C</b><i>5.C</i></div>
<div class="li" style="top:234px"><svg width="18" height="17" viewBox="0 0 18 17"><use href="#house"/></svg><b>5.D</b><i>5.D</i></div>
<div class="li" style="top:252px"><svg width="18" height="17" viewBox="0 0 18 17"><use href="#house"/></svg><b>5.E</b><i>5.E</i></div>
<div class="li" style="top:270px"><svg width="18" height="17" viewBox="0 0 18 17"><use href="#house"/></svg><b>5.F</b><i>5.F</i></div>
<div class="li" style="top:288px"><svg width="18" height="17" viewBox="0 0 18 17"><use href="#house"/></svg><b>6.A</b><i>6.A</i></div>
<div class="li" style="top:306px"><svg width="18" height="17" viewBox="0 0 18 17"><use href="#house"/></svg><b>6.B</b><i>6.B</i></div>
<div class="li" style="top:324px"><svg width="18" height="17" viewBox="0 0 18 17"><use href="#house"/></svg><b>6.C</b><i>6.C</i></div>
<div class="li" style="top:342px"><svg width="18" height="17" viewBox="0 0 18 17"><use href="#house"/></svg><b>6.D</b><i>6.D</i></div>
<div id="sb"><div class="btn" style="left:0;top:0;width:16px;height:16px;border-color:#d4d0c8 #404040 #404040 #d4d0c8;box-shadow:inset -1px -1px 0 #808080,inset 1px 1px 0 #fff"><div style="position:absolute;left:3px;top:5px;width:0;height:0;border-left:4px solid transparent;border-right:4px solid transparent;border-bottom:4px solid #000"></div></div></div>
</div>
<div class="abs" style="left:420px;top:353px;width:287px;height:30px;border:3px solid #ec1c24;border-radius:9px"></div>
<!--/LIST-->
</body></html>
